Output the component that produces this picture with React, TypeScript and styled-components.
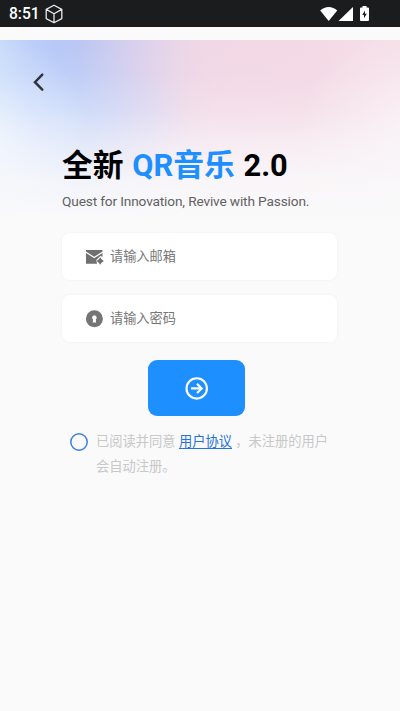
import React from 'react';
import styled, { createGlobalStyle } from 'styled-components';

const GlobalStyle = createGlobalStyle`
  * { box-sizing: border-box; }
  html, body { margin: 0; padding: 0; background: #fafafa; }
  body { font-family: Roboto, "Noto Sans CJK SC", sans-serif; }
`;

const Screen = styled.div`
  width: 400px;
  height: 711px;
  overflow: hidden;
  display: flex;
  flex-direction: column;
  background: #fafafb;
`;

const StatusBar = styled.header`
  height: 27px;
  flex: none;
  display: flex;
  align-items: center;
  padding: 0 28px 0 9px;
  background: #1a1c1e;
  color: #fff;
`;

const Clock = styled.span`
  width: 35px;
  font-size: 15.6px;
  font-weight: 500;
  line-height: 26px;
  padding-top: 1px;
  white-space: nowrap;
`;

const StatusIcons = styled.div`
  margin-left: auto;
  display: flex;
  align-items: center;
`;

const Page = styled.main`
  flex: 1;
  margin-top: 13px;
  padding: 30px 63px 0 62px;
  background:
    linear-gradient(to bottom, rgba(250, 250, 251, 0) 0, rgba(250, 250, 251, 0.03) 35px, rgba(250, 250, 251, 0.22) 70px, rgba(250, 250, 251, 0.6) 105px, rgba(250, 250, 251, 0.87) 140px, #fafafb 180px) 0 0 / 100% 181px no-repeat,
    radial-gradient(ellipse 120px 100px at 420px 85px, rgba(250, 250, 251, 0.6), rgba(250, 250, 251, 0.25) 50%, rgba(250, 250, 251, 0)) 0 0 / 100% 181px no-repeat,
    radial-gradient(ellipse 100px 110px at -10px 100px, rgba(240, 247, 255, 0.75), rgba(240, 247, 255, 0.3) 50%, rgba(240, 247, 255, 0)) 0 0 / 100% 181px no-repeat,
    radial-gradient(ellipse 125px 75px at 60px 80px, rgba(200, 218, 252, 0.75), rgba(200, 218, 252, 0.35) 50%, rgba(200, 218, 252, 0)) 0 0 / 100% 181px no-repeat,
    linear-gradient(to right, #c6daf9 0, #bccef9 30px, #b7c8f7 60px, #bcc7f3 80px, #cacbf0 105px, #d9d0ed 135px, #e5d5ea 165px, #eed7e7 190px, #f2d8e6 215px, #f3d9e5 300px, #f6dfe8 400px) 0 0 / 100% 181px no-repeat,
    #fafafb;
`;

const BackButton = styled.button`
  display: flex;
  width: 24px;
  height: 24px;
  margin: 0 0 0 -35px;
  padding: 0;
  border: 0;
  background: none;
`;

const Title = styled.h1`
  margin: 49px 0 0;
  font-size: 30.8px;
  font-weight: 700;
  line-height: 46px;
  word-spacing: 1px;
  color: #000;
  white-space: nowrap;
`;

const Brand = styled.span`
  color: #1e8fff;
`;

const Tagline = styled.p`
  margin: 3px 0 0;
  font-size: 13.7px;
  line-height: 18px;
  letter-spacing: -0.155px;
  color: #626262;
  white-space: nowrap;
`;

const Fields = styled.div`
  display: flex;
  flex-direction: column;
  gap: 15px;
  margin-top: 23px;
`;

const Field = styled.label`
  display: flex;
  align-items: center;
  gap: 6px;
  height: 47px;
  padding-left: 23px;
  border-radius: 8px;
  background: #fff;
  box-shadow: 0 0 3px rgba(0, 0, 0, 0.05);
`;

const Input = styled.input`
  flex: 1;
  min-width: 0;
  height: 30px;
  padding: 0;
  border: 0;
  outline: 0;
  background: transparent;
  font: 400 13.2px Roboto, "Noto Sans CJK SC", sans-serif;
  color: #333;
  &::placeholder { color: #777; opacity: 1; }
`;

const SubmitButton = styled.button`
  display: flex;
  align-items: center;
  justify-content: center;
  width: 97px;
  height: 56px;
  margin: 18px 0 0 86px;
  padding: 0;
  border: 0;
  border-radius: 9px;
  background: #1e8fff;
`;

const Agreement = styled.div`
  display: flex;
  gap: 8px;
  margin: 13px -10px 0 8px;
`;

const RadioIcon = styled.svg`
  flex: none;
  width: 18px;
  height: 18px;
  margin-top: 4px;
`;

const Terms = styled.p`
  margin: 0;
  font-size: 13.28px;
  line-height: 25px;
  color: #c8c8c8;
  white-space: nowrap;
`;

const TermsLink = styled.a`
  color: #2673dd;
  text-decoration: underline;
  text-underline-offset: 2px;
`;

const CubeIcon = () => (
  <svg width="20" height="20" viewBox="0 0 20 20" fill="none" stroke="#e8e8e8" strokeWidth="1.3" strokeLinejoin="round">
    <path d="M10 1.2 17.8 5.4v9.2L10 18.8 2.2 14.6V5.4zM2.2 5.4 10 9.8l7.8-4.4M10 9.8v9" />
  </svg>
);

const SignalIcons = () => (
  <svg width="52" height="18" viewBox="0 0 52 18" fill="#fff">
    <path d="M.2 5.5C5 .8 12.400.8 17.200 5.500L8.700 16z" />
    <path d="M33 2v14H18.500z" />
    <path fillRule="evenodd" d="M42.500 2.500V1h4v1.500H48q1 0 1 1V15q0 1-1 1h-7q-1 0-1-1V3.500q0-1 1-1zM45 5.500 42.300 10h1.700v3.200L46.800 8.700H45z" />
  </svg>
);

const BackIcon = () => (
  <svg width="24" height="24" viewBox="0 0 24 24" fill="none" stroke="#30343c" strokeWidth="2.5" strokeLinecap="round">
    <path d="M15.300 4.600 8 12.200l7.300 7.500" />
  </svg>
);

const MailIcon = () => (
  <svg width="19" height="18" viewBox="0 0 19 18" fill="#707070">
    <path d="M1 2h16.500v1.500L9.200 8.800 1 3.500z" />
    <path d="M1 4.900 9.200 10.300l8.300-5.400v3.900l-2.300-.8-4 4.200.9 3.600H1z" />
    <path d="M15.200 9.300 16.800 11.400 18.900 13 16.800 14.600 15.200 16.700 13.600 14.600 11.500 13 13.600 11.400z" />
  </svg>
);

const LockIcon = () => (
  <svg width="19" height="18" viewBox="0 0 19 18">
    <circle cx="9.400" cy="8.800" r="8.500" fill="#757575" />
    <path d="M9.400 5.300a2.300 2.300 0 0 1 1.400 4.100l.3 3.200H7.700l.3-3.200a2.300 2.300 0 0 1 1.400-4.100z" fill="#fff" />
  </svg>
);

const ArrowIcon = () => (
  <svg width="24" height="24" viewBox="0 0 24 24" fill="none" stroke="#fff" strokeWidth="2.100">
    <circle cx="11.700" cy="12.400" r="10.200" />
    <path d="M6 12.400h10.500M12 7.700l4.800 4.700-4.800 4.700" />
  </svg>
);

export default function App() {
  return (
    <>
      <GlobalStyle />
      <Screen>
        <StatusBar>
          <Clock>8:51</Clock>
          <CubeIcon />
          <StatusIcons><SignalIcons /></StatusIcons>
        </StatusBar>
        <Page>
          <BackButton aria-label="返回"><BackIcon /></BackButton>
          <Title>全新 <Brand>QR音乐</Brand> 2.0</Title>
          <Tagline>Quest for Innovation, Revive with Passion.</Tagline>
          <Fields>
            <Field><MailIcon /><Input type="email" placeholder="请输入邮箱" /></Field>
            <Field><LockIcon /><Input type="password" placeholder="请输入密码" /></Field>
          </Fields>
          <SubmitButton aria-label="登录"><ArrowIcon /></SubmitButton>
          <Agreement>
            <RadioIcon viewBox="0 0 18 18" fill="none" stroke="#3d7fe0" strokeWidth="1.5">
              <circle cx="9" cy="9" r="8.200" />
            </RadioIcon>
            <Terms>
              已阅读并同意 <TermsLink>用户协议</TermsLink> ，未注册的用户<br />
              会自动注册。
            </Terms>
          </Agreement>
        </Page>
      </Screen>
    </>
  );
}
